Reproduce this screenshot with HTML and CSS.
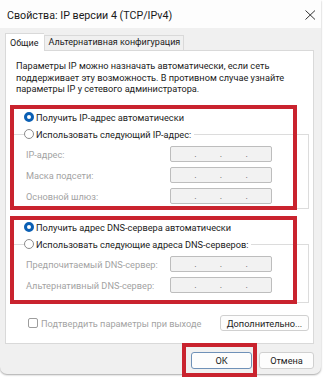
FILE: index.html
```html
<!DOCTYPE html>
<html lang="ru">
<head>
<meta charset="utf-8">
<link rel="stylesheet" href="styles.css">
</head>
<body>
<div class="window">
  <div class="titlebar">
    <span class="title">Свойства: IP версии 4 (TCP/IPv4)</span>
    <svg class="close" width="11" height="10" viewBox="0 0 11 10"><path d="M0.5 0.5 L10 9.5 M10 0.5 L0.5 9.5" stroke="#333" stroke-width="1" fill="none"/></svg>
  </div>
  <div class="body">
    <div class="tabs">
      <div class="tab active">Общие</div>
      <div class="tab">Альтернативная конфигурация</div>
    </div>
    <div class="panel">
      <p class="intro">Параметры IP можно назначать автоматически, если сеть<br>поддерживает эту возможность. В противном случае узнайте<br>параметры IP у сетевого администратора.</p>

      <div class="section s1">
        <div class="radio top"><span class="rb on"></span>Получить IP-адрес автоматически</div>
        <div class="group g1">
          <div class="radio legend"><span class="rb"></span>Использовать следующий IP-адрес:</div>
          <div class="field first"><span class="lbl">IP-адрес:</span><div class="ip"><i>.</i><i>.</i><i>.</i></div></div>
          <div class="field"><span class="lbl">Маска подсети:</span><div class="ip"><i>.</i><i>.</i><i>.</i></div></div>
          <div class="field"><span class="lbl">Основной шлюз:</span><div class="ip"><i>.</i><i>.</i><i>.</i></div></div>
        </div>
        <div class="mark m1"></div>
      </div>

      <div class="section s2">
        <div class="radio top"><span class="rb on"></span>Получить адрес DNS-сервера автоматически</div>
        <div class="group g2">
          <div class="radio legend"><span class="rb"></span>Использовать следующие адреса DNS-серверов:</div>
          <div class="field first"><span class="lbl">Предпочитаемый DNS-сервер:</span><div class="ip"><i>.</i><i>.</i><i>.</i></div></div>
          <div class="field"><span class="lbl">Альтернативный DNS-сервер:</span><div class="ip"><i>.</i><i>.</i><i>.</i></div></div>
        </div>
        <div class="mark m2"></div>
      </div>

      <div class="footer">
        <div class="check"><span class="cb"></span>Подтвердить параметры при выходе</div>
        <div class="btn adv">Дополнительно...</div>
      </div>
    </div>
    <div class="actions">
      <div class="okwrap">
        <div class="btn ok">ОК</div>
        <div class="mark m3"></div>
      </div>
      <div class="btn cancel">Отмена</div>
    </div>
  </div>
</div>
</body>
</html>
```
FILE: styles.css
```css
* { box-sizing: border-box; }
html, body { margin: 0; padding: 0; background: #ffffff; }
body {
  font-family: Roboto, "Liberation Sans", sans-serif;
  font-size: 9.2px;
  color: #1b1b1b;
  width: 326px;
  height: 384px;
  overflow: hidden;
}
.window {
  width: 321px;
  height: 374px;
  background: #f0f0f0;
  border-radius: 0 0 7px 7px;
  box-shadow: 0 1px 2px rgba(0,0,0,0.35);
  display: flex;
  flex-direction: column;
}
.titlebar {
  height: 28px;
  background: #fdfdfd;
  display: flex;
  align-items: center;
  padding-left: 7px;
  padding-right: 5px;
  justify-content: space-between;
}
.title { font-size: 10.7px; color: #1a1a1a; padding-top: 3px; }
.close { margin-top: 2px; }
.body { padding: 5px 7px 0 5px; display: flex; flex-direction: column; }
.tabs { display: flex; align-items: flex-end; height: 17px; position: relative; z-index: 1; }
.tab {
  height: 15px;
  padding: 0 3px 0 4px;
  border: 1px solid #d9d9d9;
  border-bottom: none;
  background: #f0f0f0;
  line-height: 13px;
  font-size: 9px;
}
.tab.active {
  height: 18px;
  margin-bottom: -1px;
  background: #ffffff;
  border-right: none;
  padding: 0 5px 0 4px;
  line-height: 18px;
}
.panel {
  height: 294px;
  background: #ffffff;
  border: 1px solid #d9d9d9;
  display: flex;
  flex-direction: column;
}
.intro { margin: 9px 0 0 10px; line-height: 11.7px; }
.section { position: relative; }
.s1 { margin-top: 15px; }
.s2 { margin-top: 11px; }
.radio { display: flex; align-items: center; height: 14px; margin-left: 18px; }
.rb {
  width: 10px; height: 10px; border-radius: 50%;
  border: 1px solid #8b8b8b; background: #fff;
  margin-right: 2px; flex: none;
}
.rb.on { border: 3px solid #0a5fb4; background: #fff; }
.group {
  margin: 10px 4px 0 6px;
  border: 1px solid #dcdcdc;
}
.g1 { padding-bottom: 4px; }
.g2 { padding-bottom: 9px; }
.legend {
  margin-top: -8px;
  margin-left: 11px;
  background: #fff;
  width: max-content;
  padding-right: 3px;
}
.field { display: flex; align-items: center; height: 16px; margin-top: 5px; padding-left: 13px; }
.lbl { width: 144px; color: #a3a3a3; }
.ip {
  width: 102px; height: 16px;
  border: 1px solid #bdbdbd; border-radius: 2px;
  background: #f2f2f2;
  display: flex; justify-content: space-evenly; align-items: center;
}
.ip i { font-style: normal; color: #555; font-size: 9px; line-height: 9px; }
.mark {
  position: absolute;
  border: 4px solid #c9232e;
  pointer-events: none;
}
.m1 { left: 4px; top: -5px; width: 287px; height: 105px; }
.m2 { left: 4px; top: -4px; width: 287px; height: 88px; }
.footer { display: flex; align-items: center; justify-content: space-between; margin: 12px 4px 0 0; }
.check { display: flex; align-items: center; margin-left: 22px; color: #a3a3a3; }
.cb {
  width: 10px; height: 10px; border: 1px solid #9d9d9d; border-radius: 2px;
  background: #fff; margin-right: 3px;
}
.btn {
  height: 16px;
  background: #fdfdfd;
  border: 1px solid #d0d0d0;
  border-radius: 3px;
  display: flex; align-items: center; justify-content: center;
  color: #1b1b1b;
}
.adv { width: 89px; }
.actions { display: flex; justify-content: flex-end; gap: 7px; margin-top: 8px; }
.okwrap { position: relative; }
.ok { width: 61px; height: 17px; border-color: #6f91b8; }
.cancel { width: 55px; height: 17px; }
.m3 { left: -9px; top: -9px; width: 75px; height: 34px; }
```
